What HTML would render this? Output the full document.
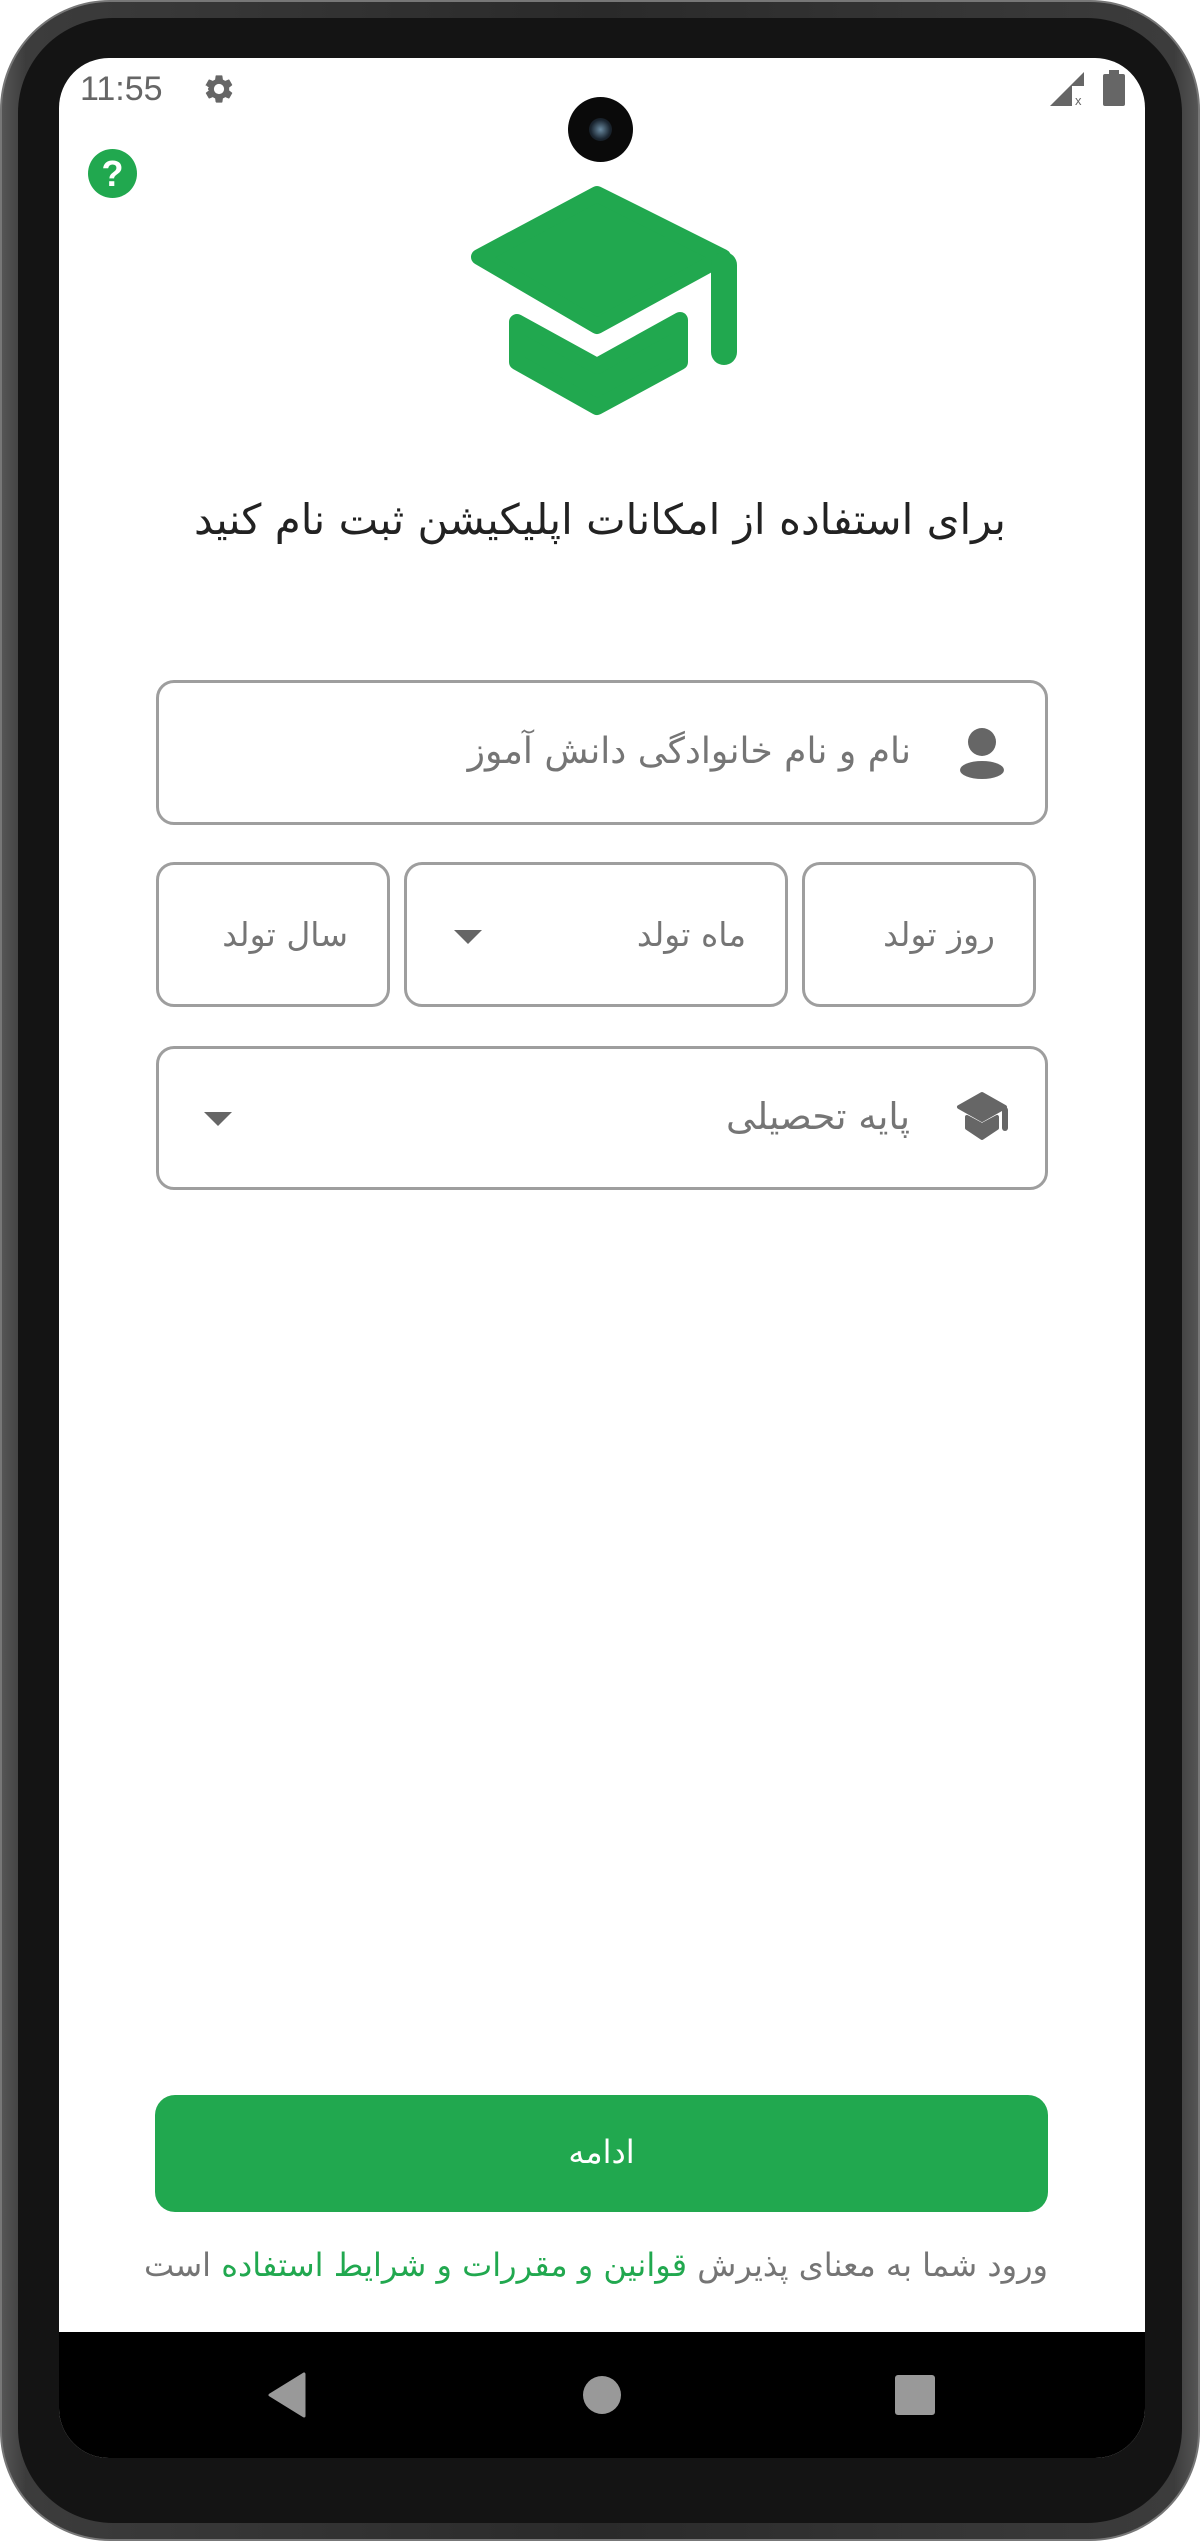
<!DOCTYPE html>
<html><head><meta charset="utf-8"><style>
*{margin:0;padding:0;box-sizing:border-box}
body{width:1200px;height:2541px;background:#fff;position:relative;overflow:hidden;font-family:"DejaVu Sans","Liberation Sans",sans-serif}
.abs{position:absolute}
.phone{left:0;top:0;width:1200px;height:2541px;border-radius:110px;background:linear-gradient(90deg,#555,#3c3c3c 2%,#2a2a2a 50%,#3c3c3c 98%,#555);border:2px solid #777}
.bezel{left:18px;top:18px;width:1164px;height:2505px;border-radius:95px;background:#141414}
.screen{left:59px;top:58px;width:1086px;height:2400px;border-radius:50px;background:#fff;overflow:hidden}
.field{position:absolute;border:3px solid #9e9e9e;border-radius:18px;background:#fff}
.t{position:absolute;color:#757575;font-size:31px;direction:rtl;white-space:nowrap;line-height:40px}
.tri{position:absolute;width:0;height:0;border-left:14px solid transparent;border-right:14px solid transparent;border-top:14px solid #666}
</style></head><body>
<div class="abs phone"></div>
<div class="abs bezel"></div>
<div class="abs screen">
  <div class="abs" style="left:0;top:2274px;width:1086px;height:126px;background:#000"></div>
</div>
<div class="abs" style="left:80px;top:70px;font-family:'Liberation Sans',sans-serif;font-size:34px;color:#666">11:55</div>
<svg class="abs" style="left:202px;top:72px" width="34" height="34" viewBox="0 0 24 24"><path fill="#666" d="M19.14 12.94c.04-.3.06-.61.06-.94 0-.32-.02-.64-.07-.94l2.03-1.58a.49.49 0 00.12-.61l-1.92-3.32a.49.49 0 00-.59-.22l-2.39.96c-.5-.38-1.030-.7-1.62-.94l-.36-2.54a.48.48 0 00-.48-.41h-3.84c-.24 0-.43.17-.47.41l-.36 2.54c-.59.24-1.13.57-1.62.94l-2.39-.96a.48.48 0 00-.59.22L2.74 8.87c-.12.21-.8.47.12.61l2.03 1.58c-.5.3-.7.63-.7.94s.2.64.7.94l-2.03 1.58a.49.49 0 00-.12.61l1.92 3.32c.12.22.37.29.59.22l2.39-.96c.5.38 1.03.7 1.62.94l.36 2.54c.5.24.24.41.48.41h3.84c.24 0 .44-.17.47-.41l.36-2.54c.59-.24 1.13-.56 1.62-.94l2.39.96c.22.08.47 0 .59-.22l1.92-3.32c.12-.22.07-.47-.12-.61l-2.01-1.58zM12 15.6A3.6 3.6 0 1112 8.4a3.6 3.6 0 010 7.2z"/></svg>
<svg class="abs" style="left:1050px;top:72px" width="36" height="34" viewBox="0 0 36 34"><path fill="#666" d="M34 0 L0 34 H22 V14 H34 Z"/><text x="25" y="33" font-size="13" fill="#666" font-family="Liberation Sans">x</text></svg>
<div class="abs" style="left:1103px;top:74px;width:22px;height:32px;background:#666;border-radius:2px"></div>
<div class="abs" style="left:1109px;top:70px;width:10px;height:5px;background:#666"></div>
<div class="abs" style="left:568px;top:97px;width:65px;height:65px;border-radius:50%;background:#0a0a0a"></div>
<div class="abs" style="left:589px;top:118px;width:23px;height:23px;border-radius:50%;background:radial-gradient(#6a8aa0,#1a2530 60%,#111)"></div>
<div class="abs" style="left:88px;top:149px;width:49px;height:49px;border-radius:50%;background:#21a84f;color:#fff;font-weight:bold;font-size:36px;text-align:center;line-height:49px;font-family:'Liberation Sans',sans-serif">?</div>
<svg class="abs" style="left:0;top:0" width="1200" height="600">
<g fill="#21a84f" stroke="#21a84f" stroke-linejoin="round" stroke-width="16">
<polygon points="597,194 479,257 597,326 723,257"/>
<polygon points="517,322 597,366 680,320 680,362 597,407 517,362"/>
</g>
<rect x="711" y="252" width="26" height="113" rx="13" fill="#21a84f"/>
</svg>
<div class="abs" style="left:0;width:1200px;top:494px;text-align:center;font-size:42px;color:#222;direction:rtl;line-height:52px">برای استفاده از امکانات اپلیکیشن ثبت نام کنید</div>
<div class="field" style="left:156px;top:680px;width:892px;height:145px"></div>
<svg class="abs" style="left:958px;top:725px" width="50" height="56"><circle cx="24" cy="17" r="14" fill="#666"/><ellipse cx="24" cy="45" rx="22" ry="9" fill="#666"/></svg>
<div class="t" style="right:289px;top:732px;font-size:36px">نام و نام خانوادگی دانش آموز</div>
<div class="field" style="left:156px;top:862px;width:234px;height:145px"></div>
<div class="field" style="left:404px;top:862px;width:384px;height:145px"></div>
<div class="field" style="left:802px;top:862px;width:234px;height:145px"></div>
<div class="t" style="right:852px;top:915px;font-size:33px">سال تولد</div>
<div class="t" style="right:454px;top:915px;font-size:33px">ماه تولد</div>
<div class="tri" style="left:454px;top:930px"></div>
<div class="t" style="right:205px;top:915px;font-size:33px">روز تولد</div>
<div class="field" style="left:156px;top:1046px;width:892px;height:144px"></div>
<svg class="abs" style="left:955px;top:1090px" width="56" height="52" viewBox="0 0 56 52">
<g fill="#666" stroke="#666" stroke-linejoin="round" stroke-width="4"><polygon points="27,4 4,17 27,30 50,17"/><polygon points="12,27 27,35 42,27 42,38 27,48 12,38"/></g>
<rect x="47" y="17" width="6" height="24" rx="3" fill="#666"/></svg>
<div class="t" style="right:290px;top:1097px;font-size:37px">پایه تحصیلی</div>
<div class="tri" style="left:204px;top:1112px"></div>
<div class="abs" style="left:155px;top:2095px;width:893px;height:117px;border-radius:20px;background:#21a84f;color:#fff;font-size:32px;text-align:center;line-height:115px">ادامه</div>
<div class="t" style="right:152px;top:2245px;font-size:32px">ورود شما به معنای پذیرش <span style="color:#21a84f">قوانین و مقررات و شرایط استفاده</span> است</div>
<svg class="abs" style="left:0;top:2360px" width="1200" height="70">
<polygon points="304,14 304,56 270,35" fill="#999" stroke="#999" stroke-width="3" stroke-linejoin="round"/>
<circle cx="602" cy="35" r="19" fill="#999"/>
<rect x="895" y="15" width="40" height="40" rx="3" fill="#999"/>
</svg>
</body></html>
